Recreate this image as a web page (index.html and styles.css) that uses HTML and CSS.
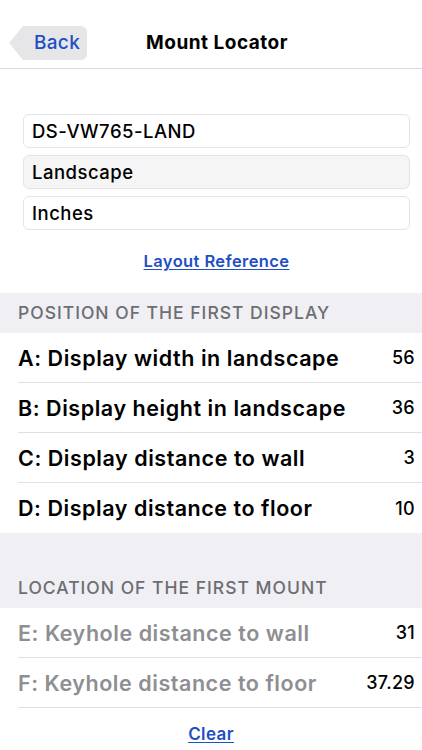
FILE: index.html
```html
<!DOCTYPE html>
<html lang="en">
<head>
    <meta charset="UTF-8">
    <meta name="viewport" content="width=device-width, initial-scale=1.0">
    <title>Mount Locator</title>
    <link rel="stylesheet" href="styles.css">
</head>
<body>
    <div class="navbar">
        <div class="back-btn">
            <svg class="back-tip" width="14" height="34" viewBox="0 0 14 34"><path d="M14 0 L14 34 L0 17 Z" fill="#e6e6e8"/></svg>
            <span class="back-body">Back</span>
        </div>
        <div class="nav-title">Mount Locator</div>
    </div>

    <div class="setup">
        <div class="field">DS-VW765-LAND</div>
        <div class="field field-gray">Landscape</div>
        <div class="field">Inches</div>
        <a class="link" href="#">Layout Reference</a>
    </div>

    <div class="section-header first">POSITION OF THE FIRST DISPLAY</div>
    <div class="rows">
        <div class="row"><span class="label">A: Display width in landscape</span><span class="value">56</span></div>
        <div class="row"><span class="label">B: Display height in landscape</span><span class="value">36</span></div>
        <div class="row"><span class="label">C: Display distance to wall</span><span class="value">3</span></div>
        <div class="row last"><span class="label">D: Display distance to floor</span><span class="value">10</span></div>
    </div>

    <div class="section-header second">LOCATION OF THE FIRST MOUNT</div>
    <div class="rows">
        <div class="row"><span class="label muted">E: Keyhole distance to wall</span><span class="value">31</span></div>
        <div class="row"><span class="label muted">F: Keyhole distance to floor</span><span class="value">37.29</span></div>
    </div>

    <div class="footer">
        <a class="link" href="#">Clear</a>
    </div>
</body>
</html>
```

FILE: styles.css
```css
body {
    margin: 0;
    font-family: Inter, "Noto Sans", sans-serif;
    background: #fff;
    color: #000;
    width: 422px;
    overflow: hidden;
}
.navbar {
    height: 69px;
    border-bottom: 1px solid #d9d9dc;
    display: flex;
    align-items: center;
    position: relative;
    box-sizing: border-box;
}
.back-btn {
    display: flex;
    margin-left: 9px;
    margin-top: 18px;
    height: 34px;
}
.back-tip {
    display: block;
}
.back-body {
    background: #e6e6e8;
    border-radius: 0 6px 6px 0;
    color: #1f4fc5;
    font-size: 19px;
    font-weight: 500;
    letter-spacing: 0.3px;
    padding: 0 7px 0 11px;
    line-height: 34px;
}
.nav-title {
    position: absolute;
    left: 0;
    right: 0;
    top: 33px;
    text-align: center;
    font-size: 19px;
    font-weight: 700;
    letter-spacing: 0.5px;
    line-height: 20px;
    margin-left: 12px;
    pointer-events: none;
}
.setup {
    padding: 45px 12px 22px 23px;
    display: flex;
    flex-direction: column;
    gap: 7px;
}
.field {
    height: 34px;
    box-sizing: border-box;
    border: 1px solid #e4e4e6;
    border-radius: 6px;
    padding: 0 8px;
    font-size: 18.5px;
    font-weight: 500;
    letter-spacing: 0.5px;
    line-height: 32px;
    background: #fff;
}
.field-gray {
    background: #f5f5f6;
}
.link {
    color: #1f4fc5;
    font-size: 16.5px;
    font-weight: 600;
    letter-spacing: 0.4px;
    line-height: 20px;
    text-align: center;
    margin-top: 14px;
    text-underline-offset: 2px;
}
.section-header {
    background: #efeff4;
    color: #6d6d72;
    font-size: 17.5px;
    font-weight: 500;
    letter-spacing: 1px;
    padding-left: 18px;
    box-sizing: border-box;
}
.section-header.first {
    height: 40px;
    line-height: 40px;
}
.section-header.second {
    height: 75px;
    padding-top: 45px;
    line-height: 20px;
}
.rows {
    padding-left: 18px;
}
.row {
    height: 50px;
    display: flex;
    align-items: center;
    justify-content: space-between;
    border-bottom: 1px solid #e0e0e3;
    box-sizing: border-box;
    padding-right: 7px;
}
.row.last {
    border-bottom: none;
}
.label {
    font-size: 21.5px;
    font-weight: 600;
    letter-spacing: 0.55px;
}
.label.muted {
    color: #8e8e93;
}
.value {
    font-size: 18px;
    font-weight: 500;
    letter-spacing: 0.3px;
}
.footer {
    display: flex;
    justify-content: center;
    padding-top: 16px;
}
.footer .link {
    margin-top: 0;
    font-size: 17px;
}
```
